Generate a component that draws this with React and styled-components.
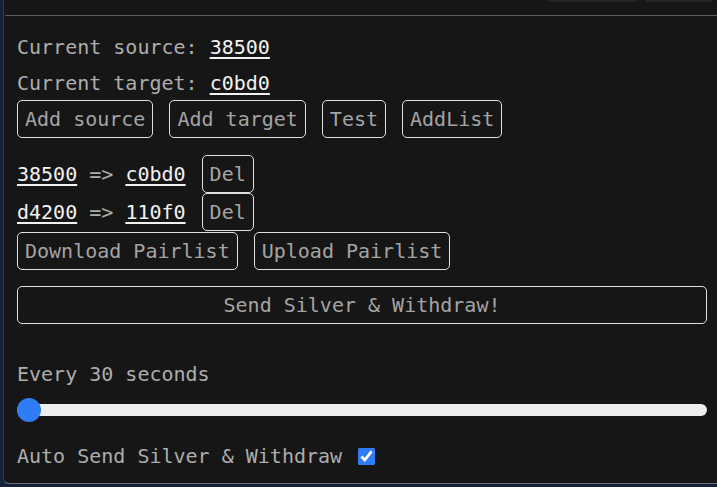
import React, { useState } from 'react'
import styled, { createGlobalStyle } from 'styled-components'

const Global = createGlobalStyle`
    html, body {
        margin:0;
        padding:0;
        background-color:#13213d;
    }
    body {
        font-family:"DejaVu Sans Mono", "Liberation Mono", monospace;
    }
`

const Page = styled.div`
    width:717px;
    height:487px;
    padding-left:3px;
    box-sizing:border-box;
    overflow:hidden;
`

const Panel = styled.div`
    height:484px;
    box-sizing:border-box;
    background-color:#161616;
    border-left:1px solid #3a3a3a;
    border-bottom:1px solid #6a6a6a;
    border-bottom-left-radius:6px;
    display:flex;
    flex-direction:column;
`

const Header = styled.div`
    height:15px;
    margin-left:1px;
    border-bottom:1px solid #5c5c5c;
    display:flex;
    justify-content:flex-end;
    align-items:flex-start;
    gap:8px;
    padding-right:5px;
`

const HeaderTab = styled.div`
    width:${p => p.w}px;
    height:2px;
    background-color:#262626;
    border-radius:0 0 5px 5px;
`

const Content = styled.div`
    padding:0 10px 0 13px;
    display:flex;
    flex-direction:column;
    font-size:20px;
    color:#adadad;
`

const Line = styled.div`
    height:28px;
    line-height:28px;
    margin-top:${p => p.mt || 0}px;
    white-space:pre;
`

const Link = styled.a`
    color:#f2f2f2;
    text-decoration:underline;
    text-decoration-thickness:2px;
    text-underline-offset:3px;
    cursor:pointer;
`

const Row = styled.div`
    display:flex;
    align-items:center;
    gap:16px;
    margin-top:${p => p.mt || 0}px;
`

const Button = styled.button`
    height:38px;
    box-sizing:border-box;
    padding:0 7px;
    background-color:transparent;
    border:1px solid #e0e0e0;
    border-radius:5px;
    color:#a4a4a4;
    font-family:inherit;
    font-size:20px;
    cursor:pointer;
    ${p => p.wide && 'width:100%;'}
`

const PairText = styled.span`
    white-space:pre;
    line-height:28px;
`

const Slider = styled.input`
    -webkit-appearance:none;
    appearance:none;
    width:100%;
    height:12px;
    margin:16px 0 0 0;
    background:#ededed;
    border-radius:6px;
    outline:none;
    &::-webkit-slider-thumb {
        -webkit-appearance:none;
        appearance:none;
        width:24px;
        height:24px;
        border-radius:50%;
        background:#2f7cf6;
        cursor:pointer;
    }
`

const CheckRow = styled.label`
    display:flex;
    align-items:center;
    gap:16px;
    height:28px;
    margin-top:26px;
    white-space:pre;
`

const Check = styled.input`
    width:17px;
    height:17px;
    margin:0;
    accent-color:#2f7cf6;
`

const pairs = [
    { source: '38500', target: 'c0bd0' },
    { source: 'd4200', target: '110f0' },
]

function App() {
    const [seconds, setSeconds] = useState(0)
    const [auto, setAuto] = useState(true)

    return (
        <Page>
            <Global />
            <Panel>
                <Header>
                    <HeaderTab w={89} />
                    <HeaderTab w={67} />
                </Header>
                <Content>
                    <Line mt={17}>Current source: <Link>38500</Link></Line>
                    <Line mt={8}>Current target: <Link>c0bd0</Link></Line>
                    <Row mt={3}>
                        <Button>Add source</Button>
                        <Button>Add target</Button>
                        <Button>Test</Button>
                        <Button>AddList</Button>
                    </Row>
                    {pairs.map((p, i) => (
                        <Row key={p.source} mt={i === 0 ? 17 : 0}>
                            <PairText><Link>{p.source}</Link> =&gt; <Link>{p.target}</Link></PairText>
                            <Button>Del</Button>
                        </Row>
                    ))}
                    <Row mt={1}>
                        <Button>Download Pairlist</Button>
                        <Button>Upload Pairlist</Button>
                    </Row>
                    <Row mt={16}>
                        <Button wide>Send Silver &amp; Withdraw!</Button>
                    </Row>
                    <Line mt={36}>Every 30 seconds</Line>
                    <Slider type="range" min={0} max={100} value={seconds} onChange={e => setSeconds(e.target.value)} />
                    <CheckRow>
                        Auto Send Silver &amp; Withdraw
                        <Check type="checkbox" checked={auto} onChange={e => setAuto(e.target.checked)} />
                    </CheckRow>
                </Content>
            </Panel>
        </Page>
    )
}

export default App
